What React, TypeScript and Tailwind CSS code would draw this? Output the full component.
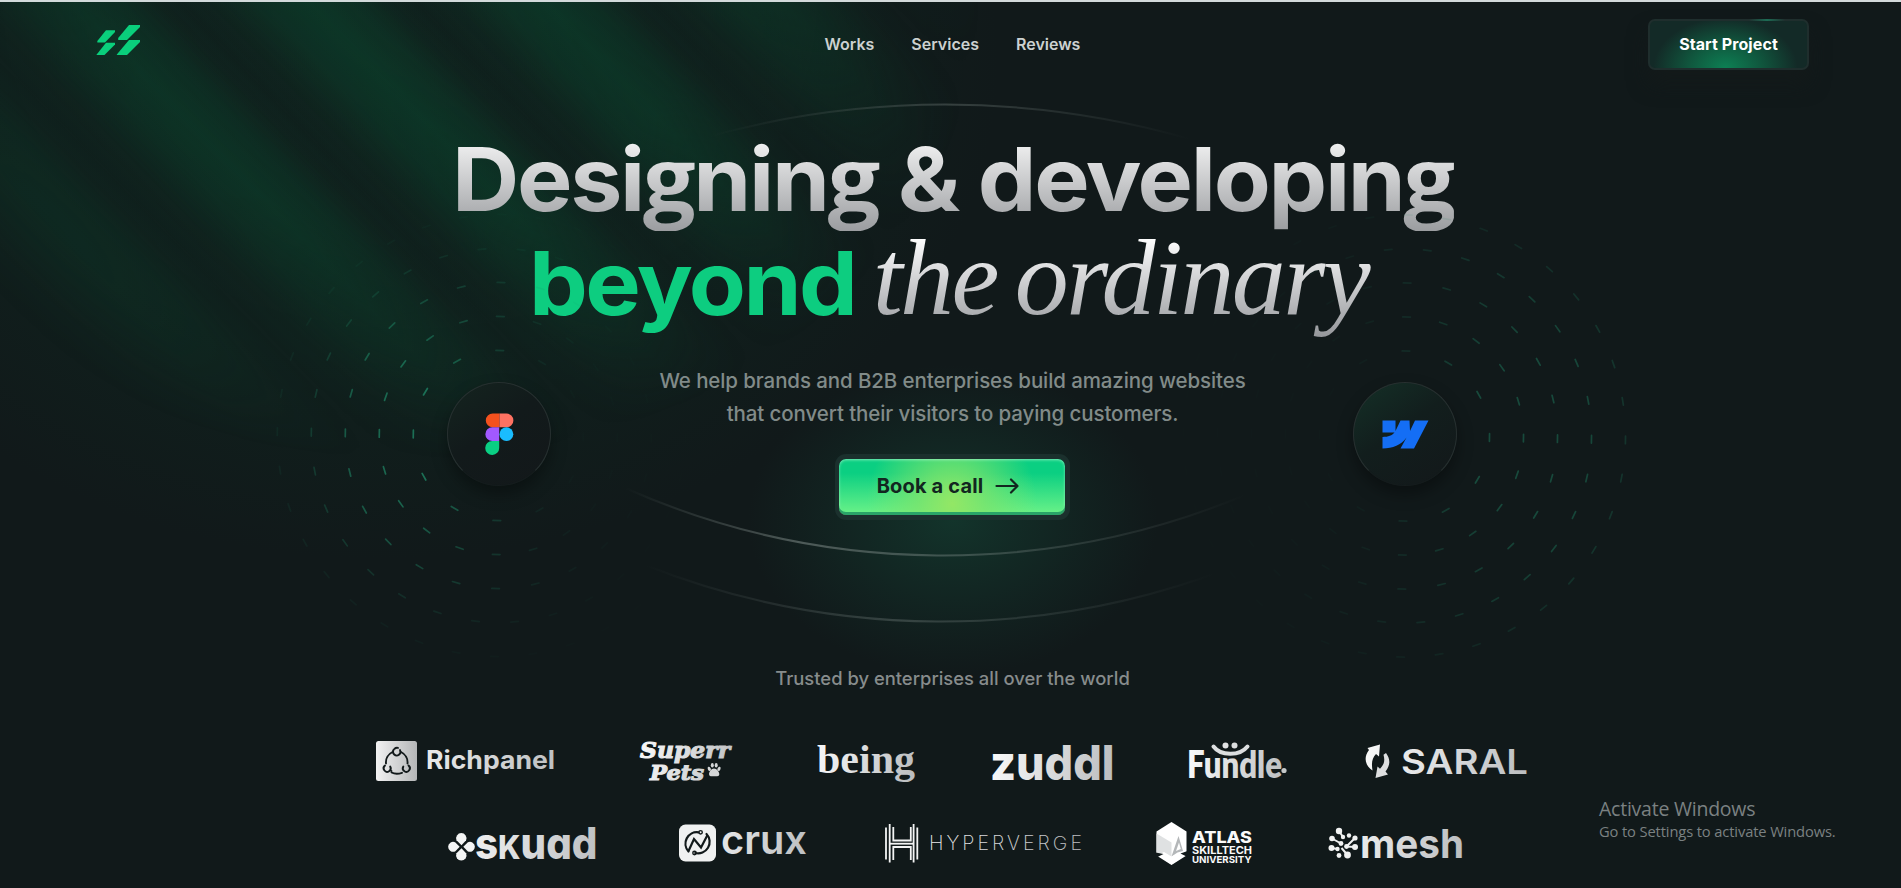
import React from "react";

const INTER = "font-['Inter',sans-serif]";

const RINGS = [
  { r: 85, n: 12 },
  { r: 119, n: 20 },
  { r: 153, n: 24 },
  { r: 187, n: 30 },
  { r: 221, n: 36 },
];

function Dashes({ cx, cy, dir, levels }: { cx: number; cy: number; dir: number; levels: number[] }) {
  return (
    <g transform={`rotate(1 ${cx} ${cy})`}>
      {RINGS.map(({ r, n }, ring) =>
        Array.from({ length: n }, (_, i) => {
          const deg = (360 / n) * i;
          const facing = (Math.cos((deg * Math.PI) / 180) * dir + 1) / 2;
          const opacity = levels[ring] * Math.min(1, 0.03 + Math.pow(facing, 1.8) * 1.1);
          return (
            <line
              key={`${ring}-${i}`}
              x1={cx + r}
              x2={cx + r}
              y1={cy - 3.8}
              y2={cy + 3.8}
              transform={`rotate(${deg} ${cx} ${cy})`}
              stroke="#1f8464"
              strokeWidth="1.7"
              strokeLinecap="round"
              opacity={opacity}
            />
          );
        }),
      )}
    </g>
  );
}

function Backdrop() {
  return (
    <svg className="absolute left-0 -top-0.5" width="1901" height="888" viewBox="0 0 1901 888" aria-hidden="true">
      <defs>
        <linearGradient id="rays" gradientUnits="userSpaceOnUse" x1="178" y1="0" x2="300" y2="-118" spreadMethod="repeat">
          <stop offset="0" stopColor="#0a4a30" stopOpacity="0" />
          <stop offset="0.15" stopColor="#0a4a30" stopOpacity="0.1" />
          <stop offset="0.35" stopColor="#0a4a30" stopOpacity="0.42" />
          <stop offset="0.55" stopColor="#0a4a30" stopOpacity="0.56" />
          <stop offset="0.75" stopColor="#0a4a30" stopOpacity="0.36" />
          <stop offset="0.9" stopColor="#0a4a30" stopOpacity="0.07" />
          <stop offset="1" stopColor="#0a4a30" stopOpacity="0" />
        </linearGradient>
        <radialGradient id="fade" gradientUnits="userSpaceOnUse" cx="0" cy="0" r="1" gradientTransform="translate(410 0) scale(570 460)">
          <stop offset="0" stopColor="#fff" stopOpacity="0.95" />
          <stop offset="0.5" stopColor="#fff" stopOpacity="0.8" />
          <stop offset="0.75" stopColor="#fff" stopOpacity="0.45" />
          <stop offset="1" stopColor="#fff" stopOpacity="0" />
        </radialGradient>
        <mask id="rayMask">
          <rect width="1000" height="600" fill="url(#fade)" />
        </mask>
        <radialGradient id="haze" gradientUnits="userSpaceOnUse" cx="0" cy="0" r="1" gradientTransform="translate(380 60) scale(620 500)">
          <stop offset="0" stopColor="#0b3d29" stopOpacity="0.22" />
          <stop offset="0.6" stopColor="#0b3d29" stopOpacity="0.2" />
          <stop offset="1" stopColor="#0b3d29" stopOpacity="0" />
        </radialGradient>
        <radialGradient id="glow" gradientUnits="userSpaceOnUse" cx="0" cy="0" r="1" gradientTransform="translate(953 520) scale(205 155)">
          <stop offset="0" stopColor="#13372d" stopOpacity="0.9" />
          <stop offset="0.5" stopColor="#13332b" stopOpacity="0.48" />
          <stop offset="1" stopColor="#12302a" stopOpacity="0" />
        </radialGradient>
        <linearGradient id="arcTop" gradientUnits="userSpaceOnUse" x1="710" x2="1190" y1="0" y2="0">
          <stop offset="0" stopColor="#5b6664" stopOpacity="0" />
          <stop offset="0.5" stopColor="#5b6664" stopOpacity="0.5" />
          <stop offset="1" stopColor="#5b6664" stopOpacity="0" />
        </linearGradient>
        <linearGradient id="arcMid" gradientUnits="userSpaceOnUse" x1="625" x2="1245" y1="0" y2="0">
          <stop offset="0" stopColor="#8a9693" stopOpacity="0" />
          <stop offset="0.28" stopColor="#8a9693" stopOpacity="0.5" />
          <stop offset="0.55" stopColor="#8a9693" stopOpacity="0.36" />
          <stop offset="1" stopColor="#8a9693" stopOpacity="0" />
        </linearGradient>
        <linearGradient id="arcLow" gradientUnits="userSpaceOnUse" x1="645" x2="1215" y1="0" y2="0">
          <stop offset="0" stopColor="#6b7775" stopOpacity="0" />
          <stop offset="0.45" stopColor="#6b7775" stopOpacity="0.42" />
          <stop offset="1" stopColor="#6b7775" stopOpacity="0" />
        </linearGradient>
      </defs>
      <rect width="1000" height="600" fill="url(#haze)" />
      <rect width="1000" height="600" fill="url(#rays)" mask="url(#rayMask)" />
      <rect x="700" y="330" width="500" height="380" fill="url(#glow)" />
      <path d="M700 139A890 890 0 0 1 1190 139" fill="none" stroke="url(#arcTop)" strokeWidth="2" />
      <path d="M625 488A785 785 0 0 0 1250 493" fill="none" stroke="url(#arcMid)" strokeWidth="2" />
      <path d="M645 565A806 806 0 0 0 1230 568" fill="none" stroke="url(#arcLow)" strokeWidth="2" />
    </svg>
  );
}

function Orbits() {
  return (
    <svg className="pointer-events-none absolute left-0 -top-0.5" width="1901" height="888" viewBox="0 0 1901 888" aria-hidden="true">
      <Dashes cx={498.3} cy={435.5} dir={-1} levels={[0.8, 0.72, 0.58, 0.28, 0.1]} />
      <Dashes cx={1404.5} cy={436} dir={1} levels={[0.46, 0.46, 0.45, 0.42, 0.25]} />
    </svg>
  );
}

const disc =
  "flex size-[104px] items-center justify-center rounded-full border border-[#273030] border-b-[#151c1d] shadow-[0_8px_16px_rgba(0,0,0,0.35)]";

function LogoText({
  x,
  y,
  w,
  size,
  weight = 600,
  family = "Inter, sans-serif",
  fill,
  italic,
  stroke,
  strokeWidth,
  children,
  features,
}: {
  x: number;
  y: number;
  w: number;
  size: number;
  weight?: number;
  family?: string;
  fill: string;
  italic?: boolean;
  stroke?: string;
  strokeWidth?: number;
  features?: string;
  children: React.ReactNode;
}) {
  return (
    <text
      x={x}
      y={y}
      textLength={w}
      lengthAdjust="spacingAndGlyphs"
      fontSize={size}
      fontWeight={weight}
      fontFamily={family}
      fontStyle={italic ? "italic" : "normal"}
      fill={fill}
      stroke={stroke}
      strokeWidth={strokeWidth}
      style={{ fontFeatureSettings: features }}
    >
      {children}
    </text>
  );
}

function Logo({ id, x, y, w, label, children }: { id: string; x: number; y: number; w: number; label: string; children: React.ReactNode }) {
  return (
    <svg className="shrink-0 overflow-visible" width={w} height="46" viewBox={`${x} ${y} ${w} 46`} role="img" aria-label={label}>
      <defs>
        <linearGradient id={id} gradientUnits="userSpaceOnUse" x1={x} y1={y} x2={x + w} y2={y + 20}>
          <stop offset="0" stopColor="#fafafa" />
          <stop offset="1" stopColor="#bcbec0" />
        </linearGradient>
      </defs>
      {children}
    </svg>
  );
}

function Richpanel() {
  return (
    <Logo id="lgRich" x={376} y={738} w={188} label="Richpanel">
      <defs>
        <linearGradient id="richBox">
          <stop offset="0" stopColor="#f2f2f2" />
          <stop offset="1" stopColor="#b4b6b7" />
        </linearGradient>
      </defs>
      <rect x="376" y="741" width="41" height="40" rx="2.5" fill="url(#richBox)" />
      <g fill="none" stroke="#12191a" strokeWidth="1.900" strokeLinecap="round">
        <path d="M386 763.500a11.500 11.500 0 0 1 6.500-11.500" />
        <path d="M401 752a11.500 11.500 0 0 1 6.500 11.500" />
        <path d="M391.500 772.500c3 1.500 7 1.500 10.500.3" />
        <path d="M393.600 749.800a3.700 3.700 0 1 0 6.400.3M394.600 748.700a3.700 3.700 0 0 1 3.400-.8" />
        <path d="M385 765.500a3.500 3.500 0 1 0 5.200 1M390.200 770.300l1.300.7" />
        <path d="M408.500 765.500a3.500 3.500 0 1 1-5.200 1" />
      </g>
      <LogoText x={426} y={769} w={129} size={25.5} weight={650} fill="url(#lgRich)">Richpanel</LogoText>
    </Logo>
  );
}

function Superr() {
  return (
    <Logo id="lgSup" x={640} y={738} w={100} label="Superr Pets">
      <LogoText x={640} y={758} w={90} size={21.5} weight={700} italic family="'DejaVu Serif', serif" fill="url(#lgSup)" stroke="url(#lgSup)" strokeWidth={1.1}>Superr</LogoText>
      <LogoText x={650} y={779.5} w={54} size={21} weight={700} italic family="'DejaVu Serif', serif" fill="url(#lgSup)" stroke="url(#lgSup)" strokeWidth={1.1}>Pets</LogoText>
      <g fill="#d5d7d8">
        <path d="M714 768.500c2.600 0 5.600 3.400 5.300 6-.3 2-2.600 1.700-5.300 1.700s-4.600.4-4.900-1.700c-.3-2.600 2.300-6 4.900-6z" />
        <ellipse cx="709.300" cy="768.800" rx="1.500" ry="2.200" transform="rotate(-25 709.300 768.800)" />
        <ellipse cx="712.300" cy="765.300" rx="1.500" ry="2.300" />
        <ellipse cx="716.200" cy="765.300" rx="1.500" ry="2.300" />
        <ellipse cx="719" cy="768.800" rx="1.500" ry="2.200" transform="rotate(25 719 768.800)" />
      </g>
    </Logo>
  );
}

function Being() {
  return (
    <Logo id="lgBeing" x={816} y={738} w={100} label="being">
      <LogoText x={817} y={772.5} w={98} size={40} weight={700} family="'Liberation Serif', serif" fill="url(#lgBeing)">being</LogoText>
    </Logo>
  );
}

function Zuddl() {
  return (
    <Logo id="lgZud" x={992} y={738} w={122} label="zuddl">
      <LogoText x={990} y={779.5} w={124.5} size={48} weight={800} fill="url(#lgZud)">zuddl</LogoText>
    </Logo>
  );
}

function Fundle() {
  return (
    <Logo id="lgFun" x={1190} y={738} w={99} label="Fundle">
      <LogoText x={1187} y={778} w={95} size={38} weight={800} family="Lato, sans-serif" fill="url(#lgFun)">Fundle</LogoText>
      <path d="M1214 746c7 10.500 26 11 33 0" fill="none" stroke="#11191a" strokeWidth="9" />
      <path d="M1213.500 746.500c7 9.500 26 10 34 0" fill="none" stroke="#dcdedf" strokeWidth="4" strokeLinecap="round" />
      <circle cx="1225.500" cy="745.500" r="3" fill="#e2e3e4" />
      <circle cx="1234.500" cy="745.500" r="3" fill="#dcdedf" />
      <circle cx="1284" cy="770.500" r="2.600" fill="#c5c7c8" />
    </Logo>
  );
}

function Saral() {
  return (
    <Logo id="lgSar" x={1365} y={738} w={162} label="SARAL">
      <path d="M1367.500 748l12.500-3.500-1 12-3-2.500c-4.500 4.500-4.500 10.500-3.500 16.500-7-4.500-9.500-13-3.500-20.500z" fill="url(#lgSar)" />
      <path d="M1388 774.500l-12.500 3.500 2-11.500 2.500 2.200c4.500-4.500 5-8.500 3.500-14l2.500-1.700c4 5.500 5 11.500-.5 18.500z" fill="#dedfe0" />
      <LogoText x={1401} y={774} w={127} size={33.5} weight={600} fill="url(#lgSar)">SARAL</LogoText>
    </Logo>
  );
}

function Skuad() {
  return (
    <Logo id="lgSku" x={448} y={820} w={157} label="skuad">
      <g fill="#f4f5f5">
        <path d="M461.500 845.300l-5-5a5.200 5.200 0 1 1 9.600 0z" />
        <path d="M461.500 848.300l-5 5a5.200 5.200 0 1 0 9.600 0z" />
        <path d="M459.700 846.800l-4.600-4.600a5 5 0 1 0 0 9.200z" />
        <path d="M463.300 846.800l4.600-4.600a5 5 0 1 1 0 9.200z" />
      </g>
      <LogoText x={475} y={858.5} w={122.5} size={43.5} weight={800} features="'cv11'" fill="url(#lgSku)">
        s<tspan fontSize="33">K</tspan>uad
      </LogoText>
    </Logo>
  );
}

function Crux() {
  return (
    <Logo id="lgCrux" x={679} y={820} w={132} label="crux">
      <rect x="679" y="824.500" width="37" height="37" rx="6.500" fill="#f0f1f1" />
      <g fill="none" stroke="#12191a" strokeWidth="2.200" strokeLinejoin="miter">
        <path d="M688.500 851.500a11.500 11.500 0 0 1 10-19.200" strokeLinecap="round" />
        <path d="M706.500 834a11.500 11.500 0 0 1-11.300 19" strokeLinecap="round" />
        <path d="M688.500 851l5.500-12 7 8.500 6.500-12.500" />
        <circle cx="700.600" cy="832.300" r="1.700" strokeWidth="1.400" />
        <circle cx="694.500" cy="853" r="1.700" strokeWidth="1.400" />
      </g>
      <LogoText x={721} y={854} w={86} size={40.5} weight={600} fill="url(#lgCrux)">crux</LogoText>
    </Logo>
  );
}

function Hyperverge() {
  return (
    <Logo id="lgHyp" x={885} y={820} w={197} label="HYPERVERGE">
      <g fill="none" stroke="#f3f4f4" strokeWidth="1.800">
        <path d="M886 827.500v32M889.700 824v38.500M893.300 827v13.500h17.500v-13.500" />
        <path d="M917.300 827.500v32M913.600 824v38.500M893.300 860v-13h17.500v13" />
        <path d="M890 843.700h23.500" />
      </g>
      <LogoText x={929} y={850} w={156} size={19.5} weight={200} fill="url(#lgHyp)">
        <tspan letterSpacing="3">HYPERVERGE</tspan>
      </LogoText>
    </Logo>
  );
}

function Atlas() {
  return (
    <Logo id="lgAtl" x={1156} y={820} w={98} label="Atlas Skilltech University">
      <path d="M1171.500 822l15 9.500v23l-15 10-15-10v-23z" fill="#fff" />
      <path d="M1156.500 833.500l15 9v14.500l-15-3.500z" fill="#dfe1e2" />
      <path d="M1171.500 856.500l7-20.500 4.500 15-5.500 1.500z" fill="#b4b7b9" />
      <path d="M1176 851l3-8.500 1.800 6.500z" fill="#fff" />
      <path d="M1156.500 855.500l7.500-3.500 7.500 4.500 8.500-4 6.500 3-15 9.500z" fill="#fff" />
      <path d="M1155.500 852.500l8 1.500-8 4zM1187.500 851l-7 2.500 7 3.500z" fill="#11191a" />
      <text fontFamily="Inter, sans-serif" fill="#fafafa">
        <tspan x="1192" y="842.500" fontSize="15.500" fontWeight="800" textLength="60" lengthAdjust="spacingAndGlyphs">ATLAS</tspan>
        <tspan x="1192" y="853.500" fontSize="10.500" fontWeight="700" textLength="60" lengthAdjust="spacingAndGlyphs">SKILLTECH</tspan>
        <tspan x="1192" y="863" fontSize="9.500" fontWeight="700" textLength="59.500" lengthAdjust="spacingAndGlyphs">UNIVERSITY</tspan>
      </text>
    </Logo>
  );
}

function Mesh() {
  const dots = [
    [1339, 831, 3.2], [1349, 835.5, 2.2], [1355, 838, 2.6], [1332, 838.5, 2.8],
    [1331.5, 848, 3], [1341, 843.5, 2.4], [1346.5, 846.5, 2.4], [1355, 847, 3],
    [1339, 855.5, 2.4], [1347.5, 855, 3.4], [1343, 837, 2.2], [1337.5, 849, 2.2],
  ];
  return (
    <Logo id="lgMesh" x={1328} y={820} w={136} label="mesh">
      <g fill="#f1f2f2" stroke="#f1f2f2">
        {dots.map(([cx, cy, r]) => (
          <circle key={`${cx}-${cy}`} cx={cx} cy={cy} r={r} stroke="none" />
        ))}
        <path d="M1339 831l4 6M1332 838.500l9 5M1355 838l-8.500 8.500M1331.500 848l6 1M1347.500 855l-6-7M1346.500 846.500l8.500.5" strokeWidth="2" fill="none" />
      </g>
      <LogoText x={1360} y={858.3} w={104} size={40} weight={700} fill="url(#lgMesh)">mesh</LogoText>
    </Logo>
  );
}

const G = () => <span className="font-['Open_Sans',sans-serif] leading-[0]">g</span>;

export default function App() {
  return (
    <div className={`relative h-[888px] w-full overflow-hidden border-t-2 border-[#d3dadb] bg-[#11191a] ${INTER}`}>
      <Backdrop />

      <header className="relative flex h-[84px] items-center">
        <div className="flex flex-1 pl-24">
          <svg width="45" height="31" viewBox="96 25 45 31" className="-mt-2" aria-label="Logo">
            <g fill="#0acf7c">
              <path d="M106 30.300h9v1.800l-10 10.300h-7.700v-1.500z" />
              <path d="M106 42.700h9v1.800l-10.500 10.500h-8.200z" />
              <path d="M129 25h11v2l-13 13h-8.800v-2z" />
              <path d="M129 40h11v2l-13 13h-10.200v-.5z" />
            </g>
          </svg>
        </div>
        <nav className="flex gap-[37px] text-base font-semibold text-[#ccd1d0]">
          <a>Works</a>
          <a>Services</a>
          <a>Reviews</a>
        </nav>
        <div className="flex flex-1 justify-end pr-[92px]">
          <button className="relative h-[51px] w-[161px] rounded-[7px] border-2 border-[#1f2e2d] bg-[radial-gradient(ellipse_72px_50px_at_48%_100%,#0d8054_0%,#10573e_50%,#132a27_100%)] text-base font-bold tracking-[0.005em] text-white shadow-[0_14px_20px_rgba(20,26,26,0.8)]">
            <span className="absolute -top-0.5 right-[22px] h-0.5 w-9 bg-linear-to-r from-transparent via-[#1d6b54] to-transparent" />
            Start Project
          </button>
        </div>
      </header>

      <main className="relative flex flex-col items-center pl-1">
        <h1 className="mt-[41px] flex flex-col items-center text-[88px] font-bold leading-[104px]">
          <span className="flex h-[104px] scale-x-[1.059]">
            <span className="inline-block whitespace-nowrap bg-linear-to-b from-white to-[#9b9da0] bg-clip-text tracking-[-0.025em] text-transparent">
              Desi<G />nin<G /> &amp; developin<G />
            </span>
          </span>
          <span className="flex h-[104px] whitespace-nowrap pl-1">
            <span className="origin-left scale-x-[1.061] tracking-[-0.027em] text-[#0dcd80]">beyond</span>
            <span className="-mt-[5px] ml-[36px] inline-block h-[112px] bg-linear-to-b from-white from-10% to-[#94969a] bg-clip-text pr-3 font-['Liberation_Serif',serif] text-[108px] font-normal italic tracking-[-0.024em] text-transparent [word-spacing:-0.06em]">
              the ordinary
            </span>
          </span>
        </h1>

        <p className="mt-[29px] text-center text-[20.500px] font-medium leading-[33px] tracking-[-0.005em] text-[#818b89]">
          We help brands and B2B enterprises build amazing websites
          <br />
          that convert their visitors to paying customers.
        </p>

        <div className="mt-6 rounded-[11px] bg-[#1b302d] p-[5px] pl-1">
          <button className="flex h-14 w-[226px] items-center justify-center gap-3 rounded-[7px] bg-[radial-gradient(ellipse_85px_90px_at_50%_80%,#93e765_0%,rgba(127,228,107,0.75)_40%,transparent_100%),linear-gradient(to_bottom,#0bcf82_25%,#6cf388_100%)] pb-0.5 pr-2 text-xl font-bold text-[#12261f] shadow-[inset_0_-3px_0_#2aa468,inset_0_1px_3px_rgba(200,255,220,0.6)]">
            <span className="tracking-[0.008em]">Book a call</span>
            <svg width="24" height="18" viewBox="0 0 24 18" fill="none" stroke="currentColor" strokeWidth="2.200" strokeLinecap="round" strokeLinejoin="round" aria-hidden="true">
              <path d="M1.500 9h21M16 2.500L22.500 9 16 15.500" />
            </svg>
          </button>
        </div>

        <p className="mt-[144px] text-[18.400px] font-medium leading-7 text-[#878c8c]">Trusted by enterprises all over the world</p>

        <div className="mt-[46px] flex gap-[76px] pr-0.5">
          <Richpanel />
          <Superr />
          <Being />
          <Zuddl />
          <Fundle />
          <Saral />
        </div>
        <div className="mt-9 flex gap-[74px] pl-[7px]">
          <Skuad />
          <Crux />
          <Hyperverge />
          <Atlas />
          <Mesh />
        </div>
      </main>

      <div className="absolute left-[447px] top-[380px]">
        <div className={`${disc} bg-[linear-gradient(145deg,#14241f_0%,#121a1b_45%,#13181a_100%)]`}>
          <svg width="29" height="42" viewBox="0 0 29 42" aria-label="Figma">
            <path d="M7.700 0.500h6.800v13.800H7.700a6.900 6.900 0 0 1 0-13.800z" fill="#f4511e" />
            <path d="M14.500 0.500h7a6.900 6.900 0 0 1 0 13.800h-7z" fill="#ff7262" />
            <path d="M7.200 14.300h7V28h-7a6.850 6.850 0 0 1 0-13.700z" fill="#a259ff" />
            <circle cx="21.400" cy="21.200" r="6.900" fill="#1abcfe" />
            <path d="M7.200 28h7v6.800a7 7 0 1 1-7-6.800z" fill="#0acf83" />
          </svg>
        </div>
      </div>
      <div className="absolute left-[1353px] top-[380px]">
        <div className={`${disc} bg-[linear-gradient(145deg,#143027_0%,#121e1d_45%,#13181a_100%)]`}>
          <svg width="47" height="29" viewBox="0 0 47 29" aria-label="Webflow">
            <path
              d="M0.500 0.500H13.500V11L18.500 0.500H27.500L28 11 33 0.500H46.500L32 28.500H18.500L24.500 17.500C19 25 11 28.500 0.500 28.500V17C6.500 16.800 10 15.500 12.500 12.500H0.500z"
              fill="#146ef5"
            />
          </svg>
        </div>
      </div>

      <Orbits />

      <div className="absolute left-[1599px] top-[793px] whitespace-nowrap font-['Open_Sans',sans-serif] text-[#7b8182]">
        <div className="text-[19.500px] font-normal leading-[28px] tracking-[-0.012em]">Activate Windows</div>
        <div className="-mt-0.5 text-[14.700px] leading-5 tracking-[-0.008em]">Go to Settings to activate Windows.</div>
      </div>
    </div>
  );
}
